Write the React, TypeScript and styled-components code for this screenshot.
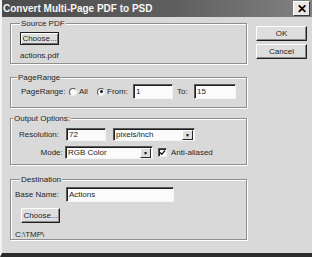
import React from 'react';
import styled, { createGlobalStyle } from 'styled-components';

const GlobalStyle = createGlobalStyle`
  html, body {
    margin: 0;
    padding: 0;
    background: #2b2b2b;
  }
`;

const BG = '#d9d9d9';

const Window = styled.div`
  width: 312px;
  height: 257px;
  box-sizing: border-box;
  display: flex;
  flex-direction: column;
  background: ${BG};
  border-left: 2px solid #f2f2f2;
  border-bottom: 4px solid #2b2b2b;
  font-family: "Liberation Sans", Arial, sans-serif;
  font-size: 8px;
  color: #262626;
  overflow: hidden;
`;

const TitleBar = styled.div`
  height: 17px;
  flex-shrink: 0;
  display: flex;
  align-items: center;
  justify-content: space-between;
  padding-left: 3px;
  margin-left: -2px;
  background: linear-gradient(to right, #4c4c4c, #5e5e5e 55%, #828282);
  color: #f6f6f6;
  font-size: 10px;
  font-weight: bold;
`;

const CloseButton = styled.div`
  width: 17px;
  height: 15px;
  margin-right: 2px;
  box-sizing: border-box;
  display: flex;
  align-items: center;
  justify-content: center;
  background: #e8e8e8;
  border: 1px solid;
  border-color: #ffffff #3a3a3a #3a3a3a #ffffff;
  color: #000;
  font-size: 12px;
  font-weight: bold;
  line-height: 1;
`;

const Body = styled.div`
  flex: 1;
  display: flex;
  padding-left: 8px;
`;

const Main = styled.div`
  width: 237px;
  display: flex;
  flex-direction: column;
`;

const Side = styled.div`
  width: 51px;
  margin-left: 9px;
  padding-top: 9px;
  display: flex;
  flex-direction: column;
  gap: 3px;
`;

const Group = styled.div<{ $top: number; $height: number }>`
  box-sizing: border-box;
  margin-top: ${({ $top }) => $top}px;
  height: ${({ $height }) => $height}px;
  border: 1px solid #8e8e8e;
  box-shadow: inset 1px 1px 0 #ffffff, 1px 1px 0 #ffffff;
  display: flex;
  flex-direction: column;
`;

const GroupTitle = styled.div<{ $left: number }>`
  margin-top: -6px;
  margin-left: ${({ $left }) => $left}px;
  padding: 0 1px;
  width: fit-content;
  line-height: 11px;
  background: ${BG};
`;

const Row = styled.div<{ $top: number; $indent: number }>`
  display: flex;
  align-items: center;
  margin-top: ${({ $top }) => $top}px;
  padding-left: ${({ $indent }) => $indent}px;
`;

const Label = styled.span<{ $width: number; $align?: string }>`
  width: ${({ $width }) => $width}px;
  flex-shrink: 0;
  text-align: ${({ $align }) => $align || 'left'};
  white-space: nowrap;
`;

const Text = styled.div<{ $top: number; $indent: number }>`
  margin-top: ${({ $top }) => $top}px;
  padding-left: ${({ $indent }) => $indent}px;
  line-height: 11px;
`;

const Button = styled.div<{ $width: number; $height: number; $default?: boolean }>`
  box-sizing: border-box;
  width: ${({ $width }) => $width}px;
  height: ${({ $height }) => $height}px;
  display: flex;
  align-items: center;
  justify-content: center;
  background: #dedede;
  border: 1px solid;
  border-color: ${({ $default }) => ($default ? '#1e1e1e' : '#ffffff #1e1e1e #1e1e1e #ffffff')};
  box-shadow: ${({ $default }) =>
    $default
      ? 'inset 1px 1px 0 #ffffff, inset -1px -1px 0 #6e6e6e'
      : 'inset -1px -1px 0 #8a8a8a'};
  color: #262626;
`;

const ButtonRow = styled.div<{ $top: number; $indent: number }>`
  margin-top: ${({ $top }) => $top}px;
  padding-left: ${({ $indent }) => $indent}px;
`;

const Field = styled.div<{ $width: number; $height?: number; $ml?: number }>`
  box-sizing: border-box;
  width: ${({ $width }) => $width}px;
  height: ${({ $height }) => $height || 14}px;
  margin-left: ${({ $ml }) => $ml || 0}px;
  flex-shrink: 0;
  display: flex;
  align-items: center;
  padding-left: 2px;
  background: #fbfbfb;
  border: 1px solid;
  border-color: #5a5a5a #f4f4f4 #f4f4f4 #5a5a5a;
  box-shadow: inset 1px 1px 0 #1e1e1e;
  color: #262626;
  white-space: nowrap;
  overflow: hidden;
`;

const SelectBox = styled(Field)`
  padding-right: 1px;
  justify-content: space-between;
`;

const DropButton = styled.span`
  box-sizing: border-box;
  width: 11px;
  height: 10px;
  margin-top: 1px;
  display: flex;
  align-items: center;
  justify-content: center;
  background: #dedede;
  border: 1px solid;
  border-color: #ffffff #2a2a2a #2a2a2a #ffffff;
  font-size: 5px;
  color: #000;
`;

const Radio = styled.span<{ $checked?: boolean }>`
  position: relative;
  box-sizing: border-box;
  width: 8px;
  height: 8px;
  margin-right: 2px;
  flex-shrink: 0;
  border-radius: 50%;
  background: #fbfbfb;
  border: 1px solid;
  border-color: #555 #eee #eee #555;
  &::after {
    content: '';
    display: ${({ $checked }) => ($checked ? 'block' : 'none')};
    position: absolute;
    left: 1.5px;
    top: 1.5px;
    width: 3px;
    height: 3px;
    border-radius: 50%;
    background: #111;
  }
`;

const Check = styled.span`
  box-sizing: border-box;
  width: 9px;
  height: 9px;
  margin-left: 5px;
  margin-right: 4px;
  flex-shrink: 0;
  display: flex;
  align-items: center;
  justify-content: center;
  background: #fbfbfb;
  border: 1px solid;
  border-color: #555 #eee #eee #555;
  box-shadow: inset 1px 1px 0 #222;
`;

const CheckMark = () => (
  <svg width="7" height="7" viewBox="0 0 7 7">
    <path d="M1 3.5 L2.8 5.3 L6 1.5" stroke="#111" strokeWidth="1.3" fill="none" />
  </svg>
);

const Select: React.FC<{ value: string; width: number; ml?: number }> = ({ value, width, ml }) => (
  <SelectBox $width={width} $height={13} $ml={ml}>
    <span>{value}</span>
    <DropButton>▼</DropButton>
  </SelectBox>
);

export default function App() {
  return (
    <>
      <GlobalStyle />
      <Window>
        <TitleBar>
          <span>Convert Multi-Page PDF to PSD</span>
          <CloseButton>✕</CloseButton>
        </TitleBar>
        <Body>
          <Main>
            <Group $top={6} $height={41}>
              <GroupTitle $left={9}>Source PDF</GroupTitle>
              <ButtonRow $top={3} $indent={9}>
                <Button $width={39} $height={13} $default>Choose...</Button>
              </ButtonRow>
              <Text $top={5} $indent={9}>actions.pdf</Text>
            </Group>

            <Group $top={13} $height={31}>
              <GroupTitle $left={6}>PageRange</GroupTitle>
              <Row $top={1} $indent={10}>
                <Label $width={48}>PageRange:</Label>
                <Radio />
                <Label $width={18}>All</Label>
                <Radio $checked />
                <Label $width={26}>From:</Label>
                <Field $width={40} $height={15}>1</Field>
                <Label $width={17} style={{ marginLeft: 4 }}>To:</Label>
                <Field $width={42} $height={15}>15</Field>
              </Row>
            </Group>

            <Group $top={10} $height={47}>
              <GroupTitle $left={2}>Output Options:</GroupTitle>
              <Row $top={4} $indent={8}>
                <Label $width={47}>Resolution:</Label>
                <Field $width={40} $height={13}>72</Field>
                <Select value="pixels/inch" width={82} ml={7} />
              </Row>
              <Row $top={5} $indent={8}>
                <Label $width={46} $align="right">Mode:&nbsp;</Label>
                <Select value="RGB Color" width={88} />
                <Check>
                  <CheckMark />
                </Check>
                <span>Anti-aliased</span>
              </Row>
            </Group>

            <Group $top={14} $height={61}>
              <GroupTitle $left={9}>Destination</GroupTitle>
              <Row $top={2} $indent={4}>
                <Label $width={51}>Base Name:</Label>
                <Field $width={108} $height={15}>Actions</Field>
              </Row>
              <ButtonRow $top={6} $indent={10}>
                <Button $width={39} $height={15}>Choose...</Button>
              </ButtonRow>
              <Text $top={6} $indent={4}>C:\TMP\</Text>
            </Group>
          </Main>

          <Side>
            <Button $width={51} $height={15}>OK</Button>
            <Button $width={51} $height={15}>Cancel</Button>
          </Side>
        </Body>
      </Window>
    </>
  );
}
